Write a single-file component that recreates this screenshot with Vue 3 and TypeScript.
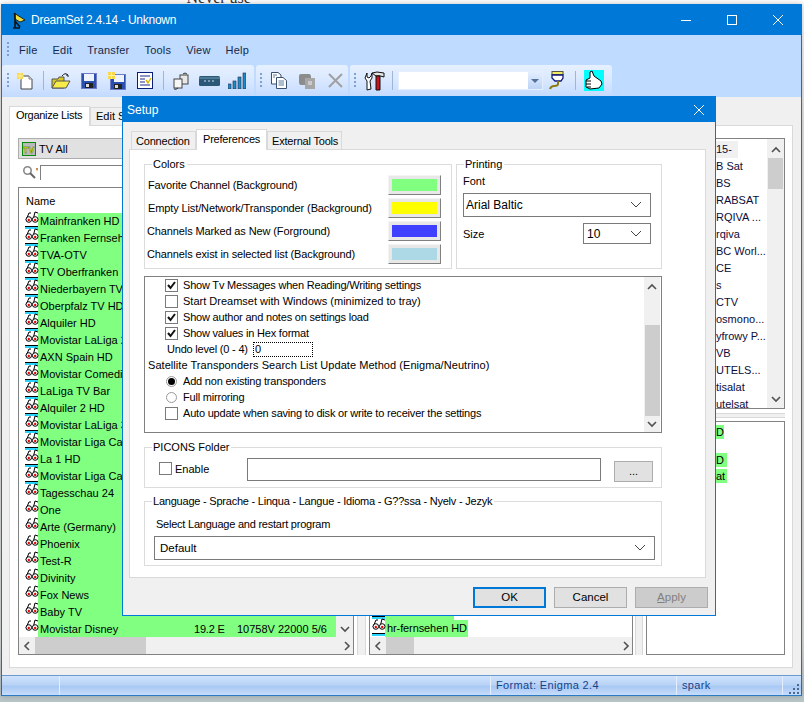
<template>
  <div class="desktop">
    <svg class="defs" width="0" height="0">
      <symbol id="glasses" viewBox="0 0 14 17">
        <path d="M1 10 L4 3 L6 3 M8 10 L10 2 L13 3" fill="none" stroke="#000" />
        <circle cx="3.8" cy="9.5" r="2.8" fill="#fff" stroke="#000" />
        <circle cx="10.2" cy="9.5" r="2.8" fill="#fff" stroke="#000" />
        <circle cx="3.8" cy="10" r="1.2" fill="#e00" />
        <circle cx="10.2" cy="10" r="1.2" fill="#e00" />
      </symbol>
      <symbol id="ch-down" viewBox="0 0 10 10"><path d="M1 3 L5 7 L9 3" fill="none" stroke="#505050" stroke-width="1.6" /></symbol>
      <symbol id="ch-up" viewBox="0 0 10 10"><path d="M1 7 L5 3 L9 7" fill="none" stroke="#505050" stroke-width="1.6" /></symbol>
      <symbol id="ch-left" viewBox="0 0 10 10"><path d="M7 1 L3 5 L7 9" fill="none" stroke="#505050" stroke-width="1.6" /></symbol>
      <symbol id="ch-right" viewBox="0 0 10 10"><path d="M3 1 L7 5 L3 9" fill="none" stroke="#505050" stroke-width="1.6" /></symbol>
      <symbol id="ch-select" viewBox="0 0 12 8"><path d="M1 1 L6 6 L11 1" fill="none" stroke="#444" /></symbol>
    </svg>

    <div class="behind">&ndash;&nbsp;"Never use"</div>

    <div class="window">
      <header class="titlebar">
        <svg class="app-icon" width="14" height="17" viewBox="0 0 14 17">
          <path d="M2 1 L13 8 L8 10 L3 7 Z" fill="#f2e23a" stroke="#222" />
          <path d="M3 1 V16 M1 16 H8 M3 9 L8 15" stroke="#111" stroke-width="1.6" fill="none" />
        </svg>
        <span class="title-text">DreamSet 2.4.14 - Unknown</span>
        <div class="caption">
          <span class="cap-btn"><svg width="12" height="12"><path d="M1 6.5 H11" stroke="#fff" /></svg></span>
          <span class="cap-btn"><svg width="12" height="12"><rect x="1.5" y="1.5" width="9" height="9" fill="none" stroke="#fff" /></svg></span>
          <span class="cap-btn"><svg width="12" height="12"><path d="M1 1 L11 11 M11 1 L1 11" stroke="#fff" /></svg></span>
        </div>
      </header>

      <nav class="menubar">
        <span class="grip"></span>
        <span v-for="m in menus" :key="m" class="menu-item">{{ m }}</span>
      </nav>

      <div class="toolbars">
        <div class="band band-1">
          <span class="grip"></span>
          <span class="tool">
            <svg width="18" height="18" viewBox="0 0 18 18">
              <path d="M5 4 H13 L16 7 V17 H5 Z" fill="#fff" stroke="#444" />
              <path d="M13 4 V7 H16" fill="#ddd" stroke="#888" />
              <rect x="1" y="1" width="6" height="6" fill="#f7d94a" />
              <path d="M4 0 V8 M0 4 H8" stroke="#fbeea8" />
            </svg>
          </span>
          <span class="tsep"></span>
          <span class="tool">
            <svg width="20" height="18" viewBox="0 0 20 18">
              <path d="M1 7 H7 L8 5 H13 V16 H1 Z" fill="#d8c820" stroke="#555" />
              <path d="M1 16 L5 9 H19 L15 16 Z" fill="#f7ec4a" stroke="#555" />
              <path d="M11 4 Q14 0 17 3 M17 3 L15 3 M17 3 L17 5" fill="none" stroke="#222" />
            </svg>
          </span>
          <span class="tool">
            <svg width="16" height="16" viewBox="0 0 16 16">
              <rect x="0.5" y="0.5" width="15" height="15" fill="#2b4fb0" stroke="#6f7cc8" />
              <rect x="3" y="1" width="10" height="7" fill="#eef2fb" />
              <rect x="4" y="10" width="8" height="5" fill="#222" />
              <rect x="5" y="11" width="3" height="3" fill="#ddd" />
            </svg>
          </span>
          <span class="tool">
            <svg width="18" height="18" viewBox="0 0 18 18">
              <rect x="2.5" y="2.5" width="15" height="15" fill="#2b4fb0" stroke="#6f7cc8" />
              <rect x="6" y="3" width="10" height="7" fill="#eef2fb" />
              <rect x="6" y="12" width="8" height="5" fill="#222" />
              <rect x="7" y="13" width="3" height="3" fill="#ddd" />
              <rect x="0" y="0" width="7" height="7" fill="#f7d94a" />
              <path d="M3.5 0 V7 M0 3.5 H7" stroke="#fbeea8" />
            </svg>
          </span>
          <span class="tool">
            <svg width="16" height="17" viewBox="0 0 16 17">
              <rect x="0.5" y="0.5" width="15" height="16" fill="#fff" stroke="#0a1f7a" />
              <path d="M3 4 H13 M3 7 H8 M3 10 H8 M3 13 H13" stroke="#1a2a8a" />
              <path d="M9 8 L11 11 L14 6" fill="none" stroke="#d8b400" stroke-width="1.4" />
            </svg>
          </span>
          <span class="tsep"></span>
          <span class="tool">
            <svg width="18" height="18" viewBox="0 0 18 18">
              <rect x="8" y="3" width="8" height="9" fill="#e8e8e8" stroke="#444" />
              <rect x="2" y="7" width="8" height="9" fill="#f6f6f6" stroke="#444" />
              <path d="M11 2 Q13 0 15 2 M2 17 Q4 18 6 16" fill="none" stroke="#333" />
            </svg>
          </span>
          <span class="tool">
            <svg width="21" height="10" viewBox="0 0 21 10">
              <rect x="0" y="0" width="21" height="10" rx="1.5" fill="#2c5878" />
              <rect x="0" y="1" width="21" height="2" fill="#4d7896" />
              <path d="M5 5 H7 M9 5 H11 M13 5 H15" stroke="#cfe0ee" />
            </svg>
          </span>
          <span class="tool">
            <svg width="18" height="17" viewBox="0 0 18 17">
              <rect x="0" y="12" width="3" height="5" fill="#1d8ac9" stroke="#222c44" stroke-width="0.6" />
              <rect x="5" y="9" width="3" height="8" fill="#1d8ac9" stroke="#222c44" stroke-width="0.6" />
              <rect x="10" y="5" width="3" height="12" fill="#1d8ac9" stroke="#222c44" stroke-width="0.6" />
              <rect x="15" y="1" width="3" height="16" fill="#1d8ac9" stroke="#222c44" stroke-width="0.6" />
            </svg>
          </span>
        </div>

        <div class="band band-2">
          <span class="grip"></span>
          <span class="tool">
            <svg width="16" height="17" viewBox="0 0 16 17">
              <path d="M0.5 0.5 H7 L10 3 V12 H0.5 Z" fill="#fff" stroke="#39506e" />
              <path d="M5.5 5.5 H12 L15.5 8.5 V16.5 H5.5 Z" fill="#fff" stroke="#39506e" />
              <path d="M7.5 9 H13 M7.5 11 H13 M7.5 13 H13 M2 3 H6 M2 5 H4" stroke="#5a7aa0" />
            </svg>
          </span>
          <span class="tool">
            <svg width="16" height="17" viewBox="0 0 16 17">
              <path d="M2 2 H10 Q12 2 12 5 V13 H2 Q0 13 0 10 V4 Q0 2 2 2 Z" fill="#8c8c8c" />
              <rect x="6" y="6" width="10" height="11" fill="#a6a6a6" />
              <path d="M9 10 H13 M9 12 H13" stroke="#eee" />
            </svg>
          </span>
          <span class="tool">
            <svg width="15" height="15" viewBox="0 0 15 15"><path d="M1 1 L14 14 M14 1 L1 14" stroke="#a0a0a0" stroke-width="2" /></svg>
          </span>
        </div>

        <div class="band band-3">
          <span class="grip"></span>
          <span class="tool">
            <svg width="21" height="20" viewBox="0 0 21 20">
              <path d="M8 2 Q12 0 20 2 L20 6 Q15 4 12 5 Z" fill="#e4e4e4" stroke="#111" />
              <path d="M12 5 H16 V19 H12 Z" fill="#c8141c" stroke="#111" />
              <path d="M3 2 L3 6 L5 7 L7 5 L8 2 L8 7 L6 10 L7 18 L3 19 L3 10 L1 7 Z" fill="#fff" stroke="#111" />
            </svg>
          </span>
          <span class="tsep"></span>
          <div class="tool-combo"><span class="tool-combo-btn"></span></div>
          <span class="tool">
            <svg width="16" height="19" viewBox="0 0 16 19">
              <rect x="3" y="0.5" width="11" height="3" fill="#f4ea60" stroke="#554" />
              <path d="M3 4 H14 V7 L12 10 H6 L3 7 Z" fill="#fff" stroke="#101a7a" stroke-width="1.3" />
              <path d="M9 10 V13 Q9 15 5 15 Q2 15 1 18" fill="none" stroke="#8a7a10" stroke-width="2" />
            </svg>
          </span>
          <span class="tsep wide"></span>
          <span class="tool">
            <svg class="thumb" width="20" height="21" viewBox="0 0 20 21">
              <rect width="20" height="21" fill="#00ffff" />
              <path d="M6 2 L8 1 L10 6 L17 11 L18 14 L15 18 L6 19 L2 17 L2 10 L6 8 Z" fill="#fff" stroke="#000" />
              <path d="M2 11 H7 M2 14 H7 M3 17 H7" stroke="#000" />
            </svg>
          </span>
        </div>
      </div>

      <main class="client">
        <div class="tabs">
          <span class="tab active">Organize Lists</span>
          <span class="tab">Edit Services</span>
        </div>
        <div class="panel">
          <section class="col-left">
            <div class="list-combo">
              <svg width="14" height="14" viewBox="0 0 14 14">
                <rect x="0.5" y="0.5" width="13" height="13" fill="#b9b9b9" stroke="#0a8a0a" />
                <text x="1" y="10.5" class="tv-mark">TV</text>
              </svg>
              <span>TV All</span>
            </div>
            <div class="search">
              <svg width="14" height="14" viewBox="0 0 14 14">
                <circle cx="5.5" cy="5.5" r="3.7" fill="#fff" stroke="#888" stroke-width="1.6" />
                <path d="M8 8 L13 13" stroke="#666" stroke-width="2" />
              </svg>
              <span class="quote">'</span>
              <div class="search-input"></div>
            </div>
            <div class="listbox">
              <div class="lb-main">
                <div class="lb-rows">
                  <div class="lb-header">Name</div>
                  <div v-for="(c, i) in channels" :key="i" class="row">
                    <span class="row-icon" :class="{ tagged: i < 16 }"><svg width="14" height="17"><use href="#glasses" /></svg></span>
                    <span class="row-green">
                      <span class="row-name">{{ c }}</span>
                      <template v-if="i === channels.length - 1">
                        <span class="row-pos">19.2 E</span>
                        <span class="row-tp">10758V 22000 5/6</span>
                      </template>
                    </span>
                  </div>
                </div>
                <div class="vscroll">
                  <svg width="10" height="10"><use href="#ch-up" /></svg>
                  <svg width="10" height="10"><use href="#ch-down" /></svg>
                </div>
              </div>
              <div class="hscroll">
                <svg width="10" height="10"><use href="#ch-left" /></svg>
                <div class="htrack"><span class="hthumb thumb-left"></span></div>
                <svg width="10" height="10"><use href="#ch-right" /></svg>
              </div>
            </div>
          </section>

          <div class="splitter"></div>

          <section class="col-mid">
            <div class="listbox">
              <div class="lb-main mid-rows">
                <div v-for="m in midRows" :key="m" class="row">
                  <span class="row-icon tagged"><svg width="14" height="17"><use href="#glasses" /></svg></span>
                  <span class="row-green short">{{ m }}</span>
                </div>
              </div>
              <div class="hscroll">
                <svg width="10" height="10"><use href="#ch-left" /></svg>
                <div class="htrack"><span class="hthumb thumb-mid"></span></div>
                <svg width="10" height="10"><use href="#ch-right" /></svg>
              </div>
            </div>
          </section>

          <div class="splitter narrow"></div>

          <section class="col-right">
            <div class="sat-list">
              <div class="sat-rows">
                <div v-for="(s, i) in sats" :key="s" class="sat-row" :class="{ first: i === 0 }">{{ s }}</div>
              </div>
              <div class="sat-scroll">
                <svg width="10" height="10"><use href="#ch-up" /></svg>
                <span class="sat-thumb"></span>
                <svg class="sat-down" width="10" height="10"><use href="#ch-down" /></svg>
              </div>
            </div>
            <div class="hsplit"></div>
            <div class="sat-list lower">
              <span class="mark m1">D</span>
              <span class="mark m2">D</span>
              <span class="mark m3">at</span>
            </div>
          </section>
        </div>
      </main>

      <footer class="statusbar">
        <span class="st st-1"></span>
        <span class="st st-2"></span>
        <span class="st st-3">Format: Enigma 2.4</span>
        <span class="st st-4">spark</span>
        <svg class="sizer" width="12" height="12" viewBox="0 0 12 12">
          <path d="M9 2 h2 v2 h-2z M5 6 h2 v2 h-2z M9 6 h2 v2 h-2z M1 10 h2 v2 h-2z M5 10 h2 v2 h-2z M9 10 h2 v2 h-2z" fill="#4a6a90" />
        </svg>
      </footer>
    </div>

    <div class="dialog">
      <header class="dlg-title">
        <span>Setup</span>
        <svg width="12" height="12"><path d="M1 1 L11 11 M11 1 L1 11" stroke="#fff" /></svg>
      </header>
      <div class="dlg-body">
        <div class="dlg-tabs">
          <span class="dtab t-conn">Connection</span>
          <span class="dtab active">Preferences</span>
          <span class="dtab t-ext">External Tools</span>
        </div>
        <div class="dlg-panel">
          <div class="top-groups">
            <div class="group colors">
              <span class="legend">Colors</span>
              <div v-for="c in colorRows" :key="c.label" class="color-row" :class="{ tight: c.tight }">
                <span>{{ c.label }}</span>
                <span class="swatch-btn"><span class="swatch" :style="{ background: c.color }"></span></span>
              </div>
            </div>
            <div class="group printing">
              <span class="legend">Printing</span>
              <div class="font-label">Font</div>
              <div class="select font-select">
                <span>Arial Baltic</span>
                <svg width="12" height="8"><use href="#ch-select" /></svg>
              </div>
              <div class="size-row">
                <span>Size</span>
                <div class="select size-select">
                  <span>10</span>
                  <svg width="12" height="8"><use href="#ch-select" /></svg>
                </div>
              </div>
            </div>
          </div>

          <div class="options">
            <div class="options-list">
              <label v-for="o in topOptions" :key="o.text" class="opt" :class="{ loose: !o.on }">
                <span class="check"><svg v-if="o.on" width="11" height="11" viewBox="0 0 11 11"><path d="M2 5 L4.5 8 L9 2" fill="none" stroke="#111" stroke-width="2" /></svg></span>
                {{ o.text }}
              </label>
              <div class="opt undo">
                <span class="undo-label">Undo level (0 - 4)</span>
                <span class="undo-input">0</span>
              </div>
              <div class="opt sat-method">Satellite Transponders Search List Update Method (Enigma/Neutrino)</div>
              <label class="opt"><span class="radio on"></span>Add non existing transponders</label>
              <label class="opt"><span class="radio"></span>Full mirroring</label>
              <label class="opt"><span class="check"></span>Auto update when saving to disk or write to receiver the settings</label>
            </div>
            <div class="opt-scroll">
              <svg width="10" height="10"><use href="#ch-up" /></svg>
              <span class="opt-thumb"></span>
              <svg width="10" height="10"><use href="#ch-down" /></svg>
            </div>
          </div>

          <div class="group picons">
            <span class="legend">PICONS Folder</span>
            <label class="enable"><span class="check"></span>Enable</label>
            <div class="path-input"></div>
            <span class="browse">...</span>
          </div>

          <div class="group language">
            <span class="legend">Language - Sprache - Linqua - Langue - Idioma - G??ssa - Nyelv - Jezyk</span>
            <div class="lang-label">Select Language and restart program</div>
            <div class="select lang-select">
              <span>Default</span>
              <svg width="12" height="8"><use href="#ch-select" /></svg>
            </div>
          </div>
        </div>
        <div class="dlg-buttons">
          <span class="btn primary">OK</span>
          <span class="btn">Cancel</span>
          <span class="btn disabled"><u>A</u>pply</span>
        </div>
      </div>
    </div>
  </div>
</template>

<script setup lang="ts">
const menus = ['File', 'Edit', 'Transfer', 'Tools', 'View', 'Help']

const channels: string[] = [
  'Mainfranken HD',
  'Franken Fernsehen',
  'TVA-OTV',
  'TV Oberfranken',
  'Niederbayern TV',
  'Oberpfalz TV HD',
  'Alquiler HD',
  'Movistar LaLiga 2',
  'AXN Spain HD',
  'Movistar Comedia',
  'LaLiga TV Bar',
  'Alquiler 2 HD',
  'Movistar LaLiga 3',
  'Movistar Liga Campeones',
  'La 1 HD',
  'Movistar Liga Campeones 2',
  'Tagesschau 24',
  'One',
  'Arte (Germany)',
  'Phoenix',
  'Test-R',
  'Divinity',
  'Fox News',
  'Baby TV',
  'Movistar Disney'
]

const midRows = ['Das Erste HD', 'hr-fernsehen HD']

const sats = [
  '15-',
  'B Sat',
  'BS',
  'RABSAT',
  'RQIVA ...',
  'rqiva',
  'BC Worl...',
  'CE',
  's',
  'CTV',
  'osmono...',
  'yfrowy P...',
  'VB',
  'UTELS...',
  'tisalat',
  'utelsat'
]

const colorRows = [
  { label: 'Favorite Channel (Background)', color: '#80ff80', tight: false },
  { label: 'Empty List/Network/Transponder (Background)', color: '#ffff00', tight: false },
  { label: 'Channels Marked as New (Forground)', color: '#4040ff', tight: true },
  { label: 'Channels exist in selected list (Background)', color: '#add8e6', tight: true }
]

const topOptions = [
  { text: 'Show Tv Messages when Reading/Writing settings', on: true },
  { text: 'Start Dreamset with Windows (minimized to tray)', on: false },
  { text: 'Show author and notes on settings load', on: true },
  { text: 'Show values in Hex format', on: true }
]
</script>

<style>
html,
body {
  margin: 0;
  background: #fff;
}
</style>

<style scoped>
.desktop {
  position: relative;
  width: 804px;
  height: 702px;
  overflow: hidden;
  background: linear-gradient(#fff 0, #e8e8e8 120px, #dcdfe0 640px, #b8c6c8 702px);
  font-family: 'Liberation Sans', Arial, sans-serif;
  font-size: 11px;
  color: #000;
}

.defs {
  position: absolute;
}

.behind {
  position: absolute;
  left: 168px;
  top: -11px;
  font-size: 16px;
  color: #333;
  font-family: 'Liberation Serif', serif;
  white-space: nowrap;
}

.window {
  position: absolute;
  left: 1px;
  top: 4px;
  width: 801px;
  height: 692px;
  box-sizing: border-box;
  border: 1px solid #0078d7;
  border-bottom-color: #2a7bc4;
  display: flex;
  flex-direction: column;
  background: #f0f0f0;
  box-shadow: 0 0 6px rgba(0, 0, 0, 0.25);
}

.titlebar {
  height: 30px;
  flex: none;
  background: #0078d7;
  display: flex;
  align-items: center;
  padding-left: 10px;
  color: #fff;
}

.title-text {
  margin-left: 5px;
  font-size: 12px;
  letter-spacing: -0.25px;
}

.caption {
  margin-left: auto;
  display: flex;
}

.cap-btn {
  width: 46px;
  height: 30px;
  display: flex;
  align-items: center;
  justify-content: center;
}

.menubar {
  height: 30px;
  flex: none;
  background: #bfdbff;
  display: flex;
  align-items: center;
  padding-left: 5px;
}

.grip {
  width: 2px;
  height: 16px;
  flex: none;
  background: repeating-linear-gradient(#7da2ce 0 2px, transparent 2px 4px);
}

.menu-item {
  margin-left: 10px;
  margin-right: 4px;
  color: #15284b;
  letter-spacing: 0.2px;
}

.menu-item + .menu-item {
  margin-left: 11px;
}

.toolbars {
  height: 32px;
  flex: none;
  background: #bfdbff;
  display: flex;
  gap: 2px;
}

.band {
  height: 31px;
  box-sizing: border-box;
  display: flex;
  align-items: center;
  padding-left: 4px;
  border-radius: 3px 3px 0 0;
  background: linear-gradient(#e6f0ff, #dbe9ff 45%, #c4dbff);
}

.band-1 {
  width: 252px;
  padding-left: 5px;
}

.band-2 {
  width: 92px;
}

.band-3 {
  width: 262px;
}

.tool {
  width: 28px;
  height: 31px;
  flex: none;
  display: flex;
  align-items: center;
  justify-content: center;
}

.band-1 .grip + .tool {
  margin-left: 2px;
}

.band-2 .grip + .tool {
  margin-left: 3px;
}

.band-3 .grip + .tool {
  margin-left: 4px;
}

.tsep {
  width: 8px;
  height: 19px;
  flex: none;
  background: linear-gradient(#9db5d6, #9db5d6) center / 1px 100% no-repeat;
}

.tsep.wide {
  width: 9px;
}

.tool-combo {
  width: 145px;
  height: 19px;
  margin-left: 2px;
  flex: none;
  background: #fff;
  border: 1px solid #e4eeff;
  box-sizing: border-box;
  display: flex;
  justify-content: flex-end;
}

.tool-combo-btn {
  width: 14px;
  background: linear-gradient(#e4eeff, #bcd4f6);
  position: relative;
}

.tool-combo-btn::after {
  content: '';
  position: absolute;
  left: 3px;
  top: 7px;
  border-left: 4px solid transparent;
  border-right: 4px solid transparent;
  border-top: 4px solid #55709a;
}

.client {
  flex: 1;
  min-height: 0;
  padding: 8px 8px 7px 7px;
  display: flex;
  flex-direction: column;
  background: #f0f0f0;
}

.tabs {
  height: 20px;
  flex: none;
  display: flex;
  align-items: flex-end;
}

.tab {
  height: 18px;
  line-height: 17px;
  box-sizing: border-box;
  border: 1px solid #d9d9d9;
  border-bottom: none;
  padding: 0 6px 0 5px;
  background: #f0f0f0;
  white-space: nowrap;
}

.tab.active {
  height: 20px;
  width: 81px;
  background: #fff;
  padding-left: 6px;
  line-height: 16px;
  margin-bottom: -1px;
  position: relative;
  letter-spacing: -0.3px;
}

.panel {
  flex: 1;
  min-height: 0;
  box-sizing: border-box;
  background: #fff;
  border: 1px solid #d9d9d9;
  padding: 12px 7px 12px 8px;
  display: flex;
}

.col-left {
  width: 336px;
  flex: none;
  display: flex;
  flex-direction: column;
}

.list-combo {
  height: 21px;
  box-sizing: border-box;
  background: #e1e1e1;
  border: 1px solid #adadad;
  display: flex;
  align-items: center;
  gap: 3px;
  padding-left: 3px;
  flex: none;
}

.tv-mark {
  font-size: 9px;
  font-weight: bold;
  fill: #f2ea00;
  stroke: #0a5a0a;
  stroke-width: 0.3px;
}

.search {
  height: 16px;
  margin-top: 5px;
  margin-bottom: 7px;
  display: flex;
  align-items: center;
  padding-left: 4px;
  flex: none;
}

.quote {
  width: 4px;
  font-size: 10px;
}

.search-input {
  flex: 1;
  height: 15px;
  border-left: 1px solid #808080;
  border-top: 1px solid #808080;
  box-sizing: border-box;
}

.listbox {
  flex: 1;
  min-height: 0;
  box-sizing: border-box;
  border: 1px solid #828282;
  display: flex;
  flex-direction: column;
  background: #fff;
}

.lb-main {
  flex: 1;
  min-height: 0;
  display: flex;
  overflow: hidden;
}

.lb-rows {
  flex: 1;
  min-width: 0;
}

.lb-header {
  height: 24px;
  line-height: 26px;
  padding-left: 7px;
  border-bottom: 1px solid #fff;
}

.row {
  height: 17px;
  line-height: 17px;
  display: flex;
  padding-left: 6px;
  white-space: nowrap;
}

.row-icon {
  width: 13px;
  height: 17px;
  flex: none;
  position: relative;
}

.row-icon svg {
  display: block;
  position: relative;
  top: -3px;
}

.row-icon.tagged::after {
  content: '';
  position: absolute;
  left: 0;
  right: 0;
  bottom: 1px;
  height: 3px;
  background: linear-gradient(#000 0 1px, #2ad4ff 1px);
}

.row-green {
  flex: 1;
  background: #80ff80;
  padding-left: 2px;
  display: flex;
  overflow: hidden;
}

.row-green.short {
  flex: none;
  padding-right: 1px;
  letter-spacing: -0.1px;
}

.row-name {
  width: 154px;
  flex: none;
}

.row-pos {
  width: 42px;
  flex: none;
  letter-spacing: -0.2px;
}

.row-tp {
  flex: none;
  margin-left: 1px;
}

.vscroll {
  width: 17px;
  flex: none;
  background: #f0f0f0;
  display: flex;
  flex-direction: column;
  justify-content: space-between;
  align-items: center;
  padding: 3px 0;
  box-sizing: border-box;
}

.hscroll {
  height: 17px;
  flex: none;
  background: #f0f0f0;
  display: flex;
  align-items: center;
  padding: 0 1px 0 3px;
  gap: 3px;
}

.htrack {
  flex: 1;
  height: 17px;
  display: flex;
}

.hthumb {
  display: block;
  height: 17px;
  background: #cdcdcd;
}

.thumb-left {
  width: 111px;
}

.thumb-mid {
  width: 28px;
}

.splitter {
  width: 15px;
  flex: none;
  box-sizing: border-box;
  background: linear-gradient(90deg, #fff 0 3px, #d9d9d9 3px 4px, #f0f0f0 4px 11px, #d9d9d9 11px 12px, #fff 12px);
}

.splitter.narrow {
  width: 13px;
  background: linear-gradient(90deg, #fff 0 2px, #d9d9d9 2px 3px, #f0f0f0 3px 9px, #d9d9d9 9px 10px, #fff 10px);
}

.col-mid {
  width: 264px;
  flex: none;
  display: flex;
  flex-direction: column;
  padding-top: 49px;
  box-sizing: border-box;
}

.mid-rows {
  flex-direction: column;
  justify-content: flex-end;
}

.mid-rows .row {
  padding-left: 2px;
}

.col-right {
  width: 139px;
  flex: none;
  display: flex;
  flex-direction: column;
}

.sat-list {
  height: 271px;
  flex: none;
  box-sizing: border-box;
  border: 1px solid #828282;
  background: #fff;
  display: flex;
  position: relative;
}

.sat-list.lower {
  flex: 1;
  height: auto;
}

.sat-rows {
  flex: 1;
  min-width: 0;
  overflow: hidden;
  padding-top: 2px;
}

.sat-row {
  height: 17px;
  line-height: 17px;
  padding-left: 69px;
  white-space: nowrap;
  color: #0c0c3a;
}

.sat-row.first {
  background: linear-gradient(90deg, #f0f0f0 0 91px, transparent 91px);
}

.sat-scroll {
  width: 17px;
  flex: none;
  background: #f0f0f0;
  display: flex;
  flex-direction: column;
  align-items: center;
  padding-top: 6px;
  padding-bottom: 4px;
  box-sizing: border-box;
}

.sat-thumb {
  display: block;
  width: 15px;
  height: 31px;
  margin-top: 3px;
  background: #cdcdcd;
}

.sat-down {
  margin-top: auto;
}

.hsplit {
  height: 12px;
  flex: none;
  background: linear-gradient(#fff 0 4px, #d9d9d9 4px 5px, #f0f0f0 5px 8px, #d9d9d9 8px 9px, #fff 9px);
}

.mark {
  position: absolute;
  left: 69px;
  background: #80ff80;
  line-height: 14px;
}

.m1 {
  top: 3px;
  width: 8px;
}

.m2 {
  top: 31px;
  width: 11px;
}

.m3 {
  top: 47px;
  width: 11px;
}

.statusbar {
  height: 20px;
  flex: none;
  border-top: 1px solid #6a9ad0;
  background: linear-gradient(#cfe2fb 0, #b9d3f6 45%, #a8c8f4 55%, #c6dcfb 100%);
  display: flex;
  align-items: center;
  color: #15428b;
  position: relative;
  box-sizing: border-box;
}

.st {
  height: 100%;
  box-sizing: border-box;
  border-right: 1px solid #e4eefc;
  line-height: 19px;
  padding-left: 5px;
  letter-spacing: 0.35px;
}

.st-1 {
  width: 58px;
}

.st-2 {
  width: 431px;
}

.st-3 {
  width: 186px;
}

.st-4 {
  width: 106px;
}

.sizer {
  position: absolute;
  right: 1px;
  bottom: 1px;
}

.dialog {
  position: absolute;
  left: 122px;
  top: 96px;
  width: 594px;
  height: 520px;
  box-sizing: border-box;
  border: 1px solid #0078d7;
  background: #f0f0f0;
  display: flex;
  flex-direction: column;
}

.dlg-title {
  height: 25px;
  flex: none;
  background: #0078d7;
  color: #fff;
  font-size: 12px;
  display: flex;
  align-items: center;
  justify-content: space-between;
  padding: 0 10px 0 4px;
}

.dlg-body {
  flex: 1;
  min-height: 0;
  padding: 7px 9px 8px 6px;
  display: flex;
  flex-direction: column;
}

.dlg-tabs {
  height: 20px;
  flex: none;
  display: flex;
  align-items: flex-end;
  padding-left: 2px;
}

.dtab {
  height: 18px;
  box-sizing: border-box;
  border: 1px solid #d9d9d9;
  border-bottom: none;
  background: #f0f0f0;
  line-height: 19px;
  padding-left: 4px;
  white-space: nowrap;
  letter-spacing: -0.2px;
}

.t-conn {
  width: 65px;
}

.t-ext {
  width: 75px;
}

.dtab.active {
  width: 71px;
  height: 21px;
  margin-bottom: -1px;
  background: #fff;
  position: relative;
  z-index: 1;
  padding-left: 6px;
}

.dlg-panel {
  height: 429px;
  flex: none;
  box-sizing: border-box;
  background: #fff;
  border: 1px solid #d9d9d9;
  padding: 14px 43px 0 14px;
  display: flex;
  flex-direction: column;
}

.top-groups {
  display: flex;
  gap: 4px;
  height: 105px;
  flex: none;
}

.group {
  position: relative;
  box-sizing: border-box;
  border: 1px solid #dcdcdc;
}

.legend {
  position: absolute;
  top: -8px;
  left: 7px;
  background: #fff;
  padding: 0 2px 0 1px;
  line-height: 15px;
  white-space: nowrap;
}

.language .legend {
  letter-spacing: -0.22px;
}

.colors {
  width: 308px;
  padding-top: 8px;
}

.printing {
  width: 206px;
  padding: 9px 10px 0 6px;
}

.color-row {
  height: 23px;
  display: flex;
  align-items: center;
  justify-content: space-between;
  padding: 0 10px 0 3px;
  letter-spacing: -0.12px;
}

.color-row.tight {
  padding-left: 2px;
}

.swatch-btn {
  width: 53px;
  height: 20px;
  box-sizing: border-box;
  padding: 3px;
  background: #e8e8e8;
  border: 1px solid;
  border-color: #f4f4f4 #808080 #808080 #f4f4f4;
  display: block;
}

.swatch {
  display: block;
  height: 12px;
}

.font-label {
  height: 14px;
  line-height: 14px;
}

.select {
  box-sizing: border-box;
  border: 1px solid #7a7a7a;
  background: #fff;
  display: flex;
  align-items: center;
  justify-content: space-between;
  padding: 0 8px 0 2px;
}

.font-select {
  height: 24px;
  margin-top: 5px;
  font-size: 12px;
}

.size-row {
  margin-top: 6px;
  display: flex;
  align-items: center;
  justify-content: space-between;
}

.size-select {
  width: 68px;
  height: 21px;
  font-size: 12px;
  padding-left: 3px;
}

.options {
  margin-top: 7px;
  height: 157px;
  flex: none;
  box-sizing: border-box;
  border: 1px solid #808080;
  display: flex;
  padding-right: 1px;
}

.options-list {
  flex: 1;
  min-width: 0;
}

.opt {
  height: 16px;
  display: flex;
  align-items: center;
  padding-left: 20px;
  white-space: nowrap;
  letter-spacing: -0.2px;
}

.opt.loose {
  letter-spacing: 0;
}

.check {
  width: 13px;
  height: 13px;
  box-sizing: border-box;
  border: 1px solid #7a7a7a;
  background: #fff;
  margin-right: 5px;
  flex: none;
  display: block;
}

.check svg {
  display: block;
}

.undo {
  padding-left: 22px;
}

.undo-label {
  width: 86px;
  flex: none;
}

.undo-input {
  width: 60px;
  height: 15px;
  box-sizing: border-box;
  border: 1px dotted #000;
  line-height: 13px;
  padding-left: 1px;
}

.opt.sat-method {
  padding-left: 3px;
  letter-spacing: 0.05px;
}

.radio {
  width: 11px;
  height: 11px;
  box-sizing: border-box;
  margin: 0 6px 0 1px;
  border: 1px solid #999;
  border-radius: 50%;
  background: #fff;
  position: relative;
  flex: none;
}

.radio.on::after {
  content: '';
  position: absolute;
  left: 1px;
  top: 1px;
  width: 7px;
  height: 7px;
  border-radius: 50%;
  background: #000;
}

.opt-scroll {
  width: 16px;
  flex: none;
  background: #f0f0f0;
  display: flex;
  flex-direction: column;
  align-items: center;
  padding-top: 5px;
  box-sizing: border-box;
}

.opt-thumb {
  display: block;
  width: 15px;
  height: 91px;
  margin-top: 33px;
  margin-bottom: 3px;
  background: #cdcdcd;
}

.picons {
  margin-top: 14px;
  height: 41px;
  flex: none;
  width: 518px;
  display: flex;
  align-items: center;
  padding: 2px 0 0 14px;
}

.enable {
  width: 88px;
  display: flex;
  align-items: center;
  flex: none;
}

.enable .check {
  margin-right: 3px;
}

.path-input {
  width: 354px;
  height: 23px;
  box-sizing: border-box;
  border: 1px solid #7a7a7a;
  margin-top: 1px;
}

.browse {
  width: 39px;
  height: 21px;
  margin-left: 13px;
  margin-top: 5px;
  box-sizing: border-box;
  border: 1px solid #adadad;
  background: #e1e1e1;
  text-align: center;
  line-height: 19px;
}

.language {
  margin-top: 13px;
  height: 65px;
  flex: none;
  width: 518px;
  padding: 15px 6px 0 9px;
}

.lang-label {
  height: 15px;
  line-height: 15px;
  padding-left: 2px;
  letter-spacing: -0.23px;
}

.lang-select {
  margin-top: 4px;
  height: 24px;
  padding-left: 5px;
  font-size: 11.5px;
}

.dlg-buttons {
  margin-top: 9px;
  margin-right: -2px;
  display: flex;
  justify-content: flex-end;
  gap: 8px;
}

.btn {
  width: 73px;
  height: 21px;
  box-sizing: border-box;
  border: 1px solid #adadad;
  background: #e1e1e1;
  text-align: center;
  line-height: 19px;
  font-size: 11.5px;
}

.btn.primary {
  border: 2px solid #0078d7;
  line-height: 17px;
}

.btn.disabled {
  background: #ccc;
  color: #808080;
}
</style>
